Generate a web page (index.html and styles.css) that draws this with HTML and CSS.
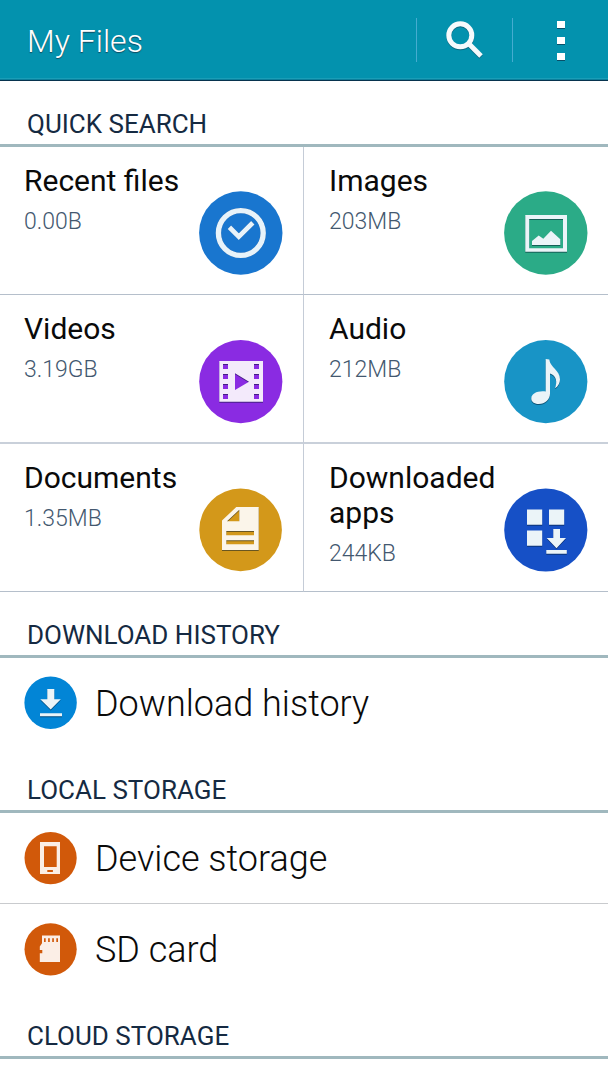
FILE: index.html
```html
<!DOCTYPE html>
<html lang="en">
<head>
<meta charset="utf-8">
<title>My Files</title>
<link rel="stylesheet" href="styles.css">
</head>
<body>
<header class="bar">
  <h1 class="bar-title">My Files</h1>
  <button class="bar-btn search" aria-label="Search">
    <svg width="44" height="44" viewBox="0 0 44 44">
      <g class="shade" transform="translate(0 1)"><circle cx="17.3" cy="17.3" r="11.5"/><path d="M25.6 25.6 38 38"/></g>
      <g class="glass"><circle cx="17.3" cy="17.3" r="11.5"/><path d="M25.6 25.6 38 38"/></g>
    </svg>
  </button>
  <button class="bar-btn more" aria-label="More options"><i></i><i></i><i></i></button>
</header>

<main>
  <h2 class="heading"><span class="w-quick">QUICK SEARCH</span></h2>
  <section class="grid">
    <article class="tile">
      <div class="info"><h3 class="name">Recent files</h3><p class="size">0.00B</p></div>
      <svg class="icon" viewBox="0 0 84 85">
        <circle cx="41.8" cy="42" r="41.7" fill="#1976cf"/>
        <g class="line"><circle cx="41.8" cy="42" r="22.4" stroke-width="5.4"/><path d="M30.4 36.2 39.8 45.6 53.8 31.8" stroke-width="4.8"/></g>
      </svg>
    </article>
    <article class="tile">
      <div class="info"><h3 class="name">Images</h3><p class="size">203MB</p></div>
      <svg class="icon" viewBox="0 0 84 85">
        <circle cx="41.8" cy="42" r="41.7" fill="#2bab87"/>
        <g class="solid"><path fill-rule="evenodd" d="M21.3 24H63V60.8H21.3ZM25.2 28V57.2H59V28Z"/><path d="M28 54V50L34.7 44.6 39.3 47.7 47 39.8 56.3 48.3V54Z"/></g>
      </svg>
    </article>
    <article class="tile">
      <div class="info"><h3 class="name">Videos</h3><p class="size">3.19GB</p></div>
      <svg class="icon" viewBox="0 0 84 85">
        <circle cx="41.8" cy="42.6" r="41.6" fill="#8a2be2"/>
        <g class="solid"><path fill="#f3eafb" fill-rule="evenodd" d="M20.3 22H64V62.7H20.3ZM24 25v5h5v-5ZM24 35v5h5v-5ZM24 45v5h5v-5ZM24 55v5h5v-5ZM55 25v5h5v-5ZM55 35v5h5v-5ZM55 45v5h5v-5ZM55 55v5h5v-5ZM36 34.3V51L50 42.7Z"/></g>
      </svg>
    </article>
    <article class="tile">
      <div class="info"><h3 class="name">Audio</h3><p class="size">212MB</p></div>
      <svg class="icon" viewBox="0 0 84 85">
        <circle cx="41.8" cy="42.6" r="41.6" fill="#1894c6"/>
        <g class="solid"><path d="M41.7 20 45.3 20.6C46.3 29 56 31 56 40.5 56 44 54 47.5 51 49.3 53.5 43 52.5 36.5 46 34.5V54.5C46 60.5 41 65 34.8 65 30 65 27.3 62.6 27.3 59.5 27.3 54.5 34 51.5 41.7 52.6Z"/></g>
      </svg>
    </article>
    <article class="tile">
      <div class="info"><h3 class="name">Documents</h3><p class="size">1.35MB</p></div>
      <svg class="icon" viewBox="0 0 84 85">
        <circle cx="41.6" cy="41.9" r="41.3" fill="#d3981a"/>
        <g class="solid"><path fill="#fbf5ea" fill-rule="evenodd" d="M37.3 19H59.7V62H23V32.6ZM40.3 21.7 28 33.2H40.3ZM27.3 43V47.2H55V43ZM27.3 52.2V56.2H55V52.2Z"/></g>
      </svg>
    </article>
    <article class="tile">
      <div class="info"><h3 class="name">Downloaded apps</h3><p class="size">244KB</p></div>
      <svg class="icon" viewBox="0 0 84 85">
        <circle cx="41.8" cy="42" r="41.6" fill="#1650c6"/>
        <g class="solid"><path d="M23 21.6H38.2V36.8H23ZM45 21.6H60.2V36.8H45ZM23 42.6H38.2V57.8H23ZM49.3 41H56V50H62L52.5 60.2 42.7 50H49.3ZM42.3 62H62.8V65.7H42.3Z"/></g>
      </svg>
    </article>
  </section>

  <h2 class="heading"><span class="w-history">DOWNLOAD HISTORY</span></h2>
  <div class="row short">
    <svg class="mini" viewBox="0 0 53 53">
      <circle cx="26.6" cy="26.7" r="26.2" fill="#0285d6"/>
      <g class="solid"><path d="M23.3 13H30.3V23.3H36.8L26.7 33.5 16.3 23.3H23.3ZM16 37.2H38V40.3H16Z"/></g>
    </svg>
    <span class="label l-history">Download history</span>
  </div>

  <h2 class="heading"><span class="w-local">LOCAL STORAGE</span></h2>
  <div class="row ruled">
    <svg class="mini" viewBox="0 0 53 53">
      <circle cx="26.6" cy="26.1" r="26.1" fill="#d1590a"/>
      <path fill="#fbeee6" fill-rule="evenodd" d="M16 10H36V42H16ZM20 14.3V35H32.7V14.3ZM23.3 38V40H28.9V38Z"/>
    </svg>
    <span class="label l-device">Device storage</span>
  </div>
  <div class="row">
    <svg class="mini" viewBox="0 0 53 53">
      <circle cx="26.6" cy="26.3" r="26.1" fill="#d1590a"/>
      <path fill="#fbeee6" fill-rule="evenodd" d="M18 12.5H36V39H15.8V30.2H18.3V27H15.8V23.5L18 20.3ZM20 15.3V19H21.7V15.3ZM24.1 15.3V19H25.8V15.3ZM28.2 15.3V19H29.9V15.3ZM32.3 15.3V19H34V15.3Z"/>
    </svg>
    <span class="label l-sd">SD card</span>
  </div>

  <h2 class="heading"><span class="w-cloud">CLOUD STORAGE</span></h2>
</main>
</body>
</html>
```
FILE: styles.css
```css
* { box-sizing: border-box; margin: 0; padding: 0; }
body {
  width: 608px;
  height: 1080px;
  overflow: hidden;
  background: #fff;
  font-family: Roboto, sans-serif;
  color: #0a0a0a;
}
svg { display: block; flex: none; }

.bar {
  display: flex;
  align-items: flex-start;
  height: 81px;
  background: #0392ae;
  border-bottom: 1px solid #07334e;
  box-shadow: inset 0 -1px #0b7f9b, inset 0 -2px #1a9db7;
}
.bar-title {
  flex: 1;
  padding: 21px 0 0 27px;
  font-size: 32px;
  line-height: 40px;
  font-weight: 300;
  color: #fff;
  text-shadow: 0 1px 1px #124a60;
}
.bar-btn {
  height: 44px;
  margin-top: 18px;
  border: 0;
  border-left: 1px solid #45acd0;
  background: none;
}
.search { width: 96px; padding-left: 26px; }
.search svg { margin-left: 0; }
.more {
  width: 96px;
  display: flex;
  flex-direction: column;
  gap: 9px;
  padding: 3px 0 0 44px;
}
.more i { width: 8px; height: 7px; background: #fff; box-shadow: 0 1px #0a4f68; }
.glass, .shade { fill: none; stroke: #f6fafc; stroke-width: 5; }
.shade { stroke: #0b6780; }

.heading {
  height: 66px;
  padding: 28px 0 0 27px;
  border-bottom: 3px solid #a0b8be;
  font-size: 26px;
  line-height: 30px;
  font-weight: 400;
  color: #152a42;
}

.grid {
  display: grid;
  grid-template-columns: 304px 304px;
  grid-template-rows: 148px 149px 148px;
}
.tile {
  display: flex;
  padding-left: 24px;
  border-bottom: 1px solid #b5bfcb;
}
.tile:nth-child(odd) { border-right: 1px solid #c5ccd7; }
.tile:nth-child(even) { padding-left: 25px; }
.tile:nth-child(3), .tile:nth-child(4) { border-bottom: 2px solid #c9d0da; }
.info { width: 175px; padding-top: 16px; }
.name { font-size: 30px; line-height: 35px; font-weight: 400; }
.size {
  margin-top: 10px;
  font-size: 23px;
  line-height: 28px;
  font-weight: 300;
  color: #43586f;
}
.icon { width: 84px; height: 85px; margin-top: 44px; }
.solid { fill: #ebf4f8; filter: drop-shadow(0.5px 1px 0.3px rgba(0, 20, 40, .5)); }
.line { fill: none; stroke: #e8f3fa; filter: drop-shadow(0 0.5px 0.4px rgba(0, 20, 60, .4)); }

.row { display: flex; height: 89px; padding: 19px 0 0 24px; }
.row.short { padding-top: 18px; }
.row.ruled { height: 91px; border-bottom: 1px solid #c9cbce; }
.mini { width: 53px; height: 53px; margin-right: 18px; }
.label { margin-top: 5px; font-size: 36px; line-height: 44px; font-weight: 300; }
.short .label { margin-top: 6px; }
```
